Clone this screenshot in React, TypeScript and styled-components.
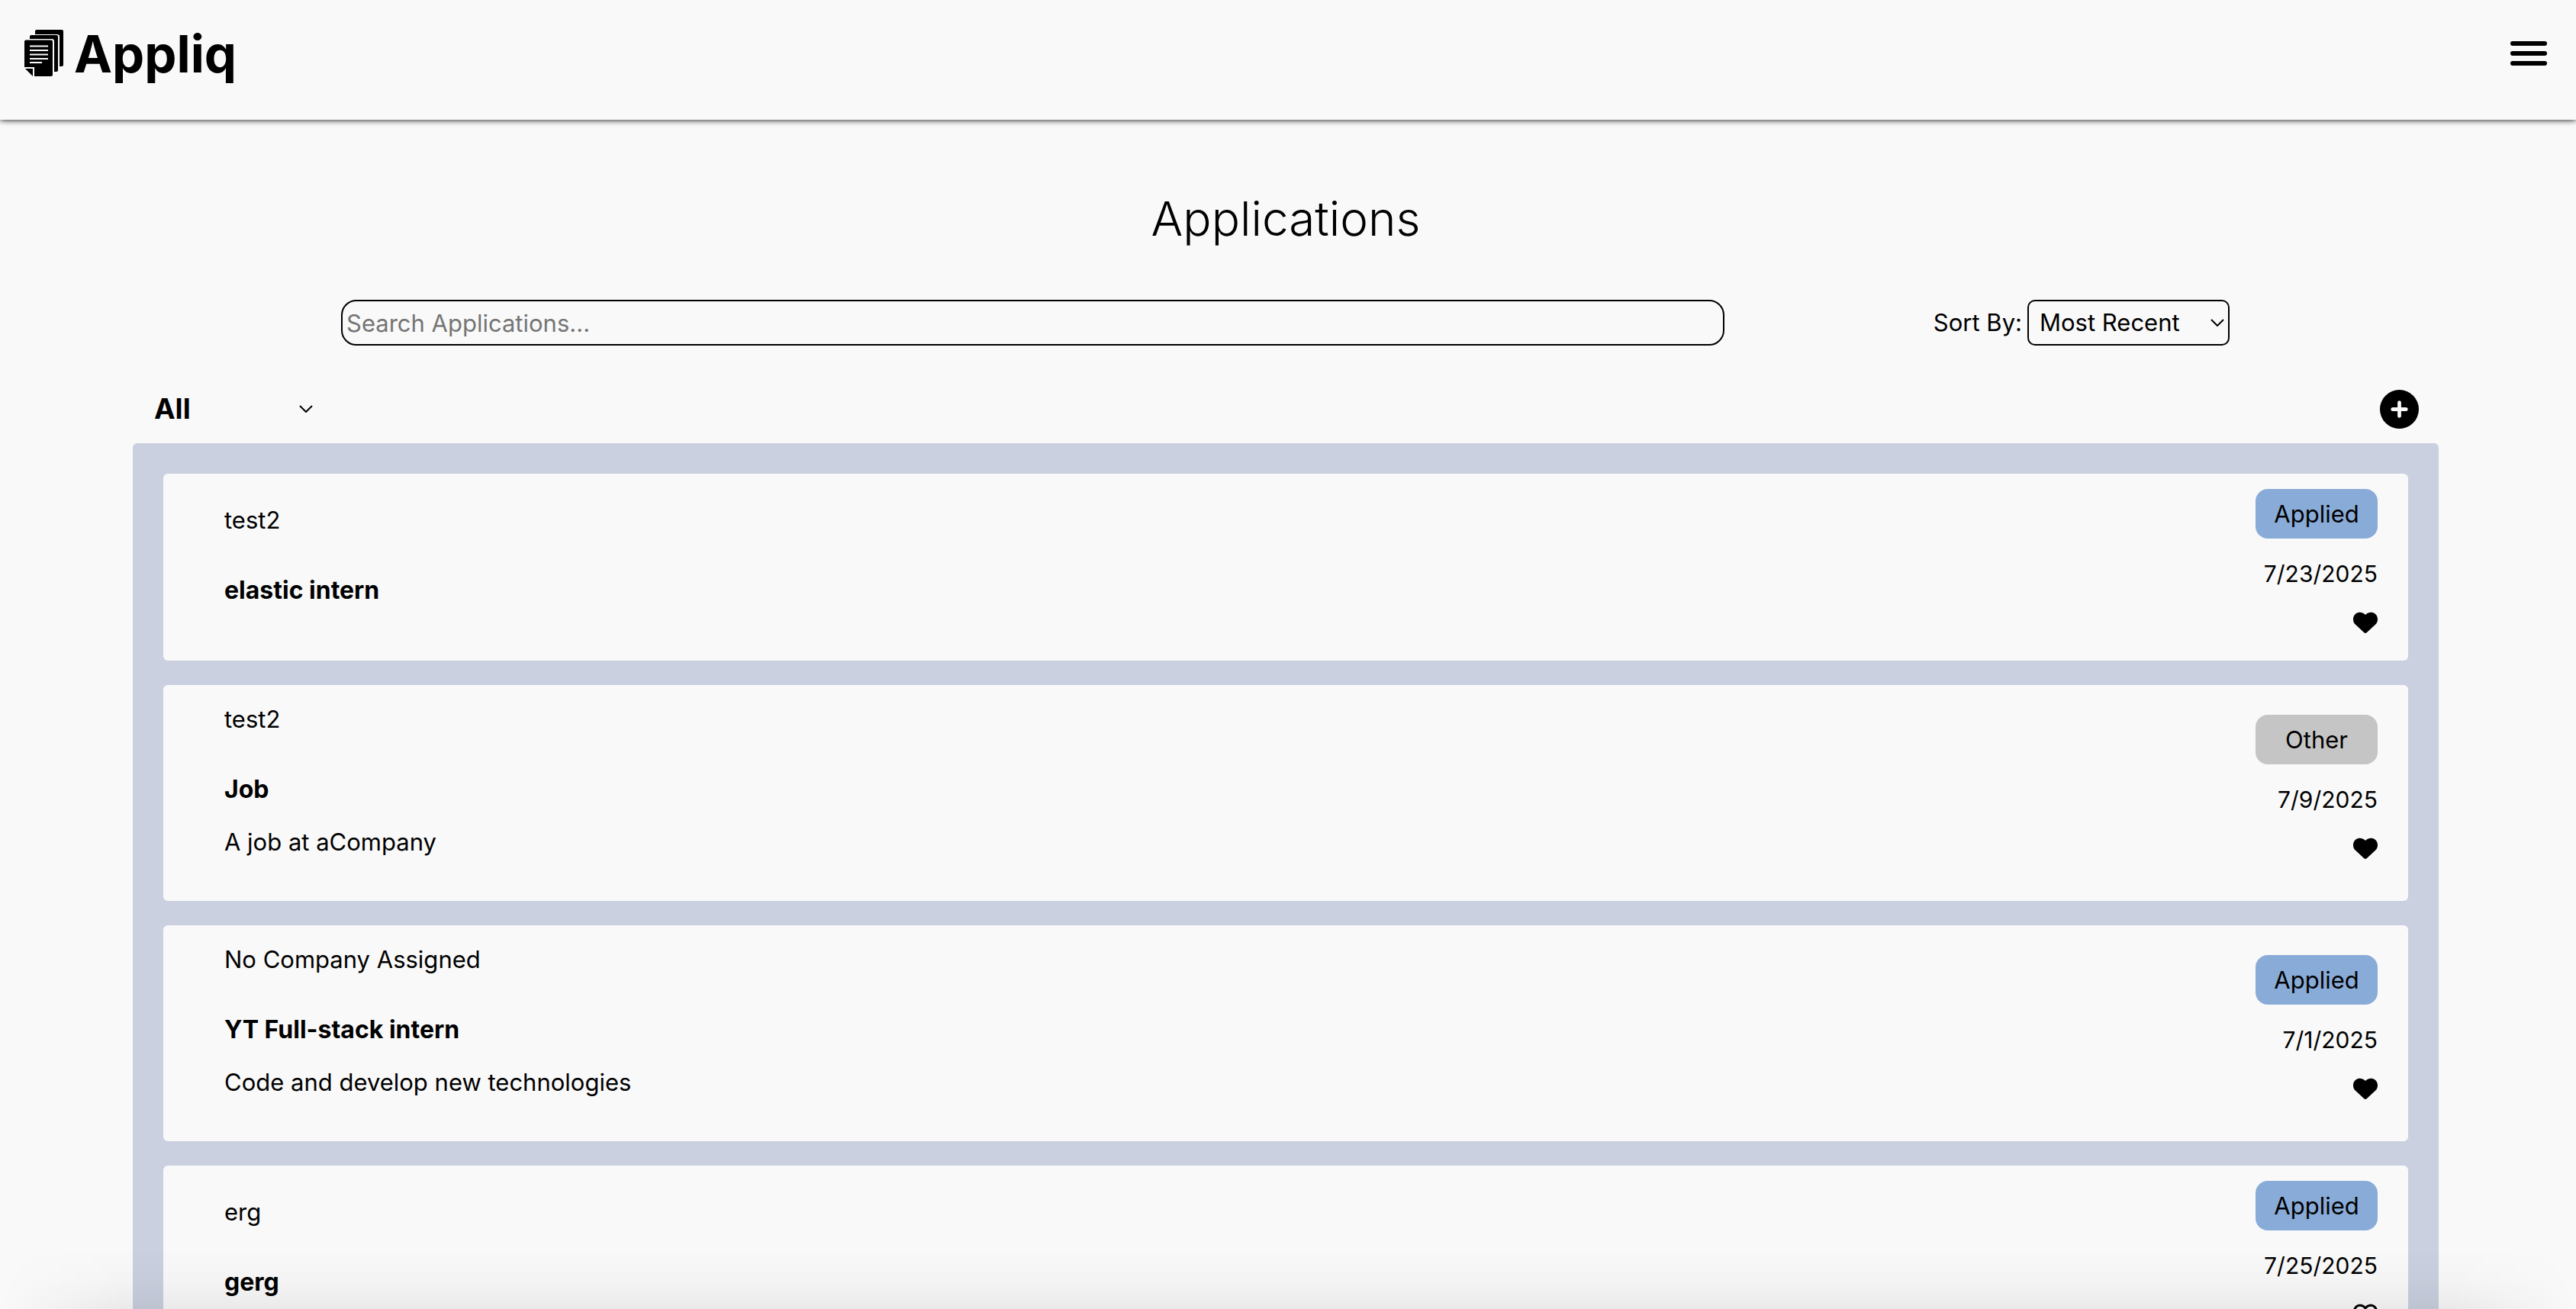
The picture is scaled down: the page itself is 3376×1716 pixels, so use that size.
import React, { useState } from "react";
import styled, { createGlobalStyle } from "styled-components";
import { FaCirclePlus, FaHeart, FaRegHeart } from "react-icons/fa6";

const ink = "#000000";
const paper = "#f9f9f9";

const GlobalStyle = createGlobalStyle`
  *, *::before, *::after { box-sizing: border-box; }
  html, body { margin: 0; background: ${paper}; }
  body {
    color: ${ink};
    font-family: Inter, "Noto Sans", sans-serif;
    font-size: 31px;
    line-height: 38px;
  }
  html { scrollbar-width: none; }
  button, input, select { font: inherit; color: inherit; }
  h1, h2, p { margin: 0; font: inherit; }
`;

const Header = styled.header`
  display: flex;
  justify-content: space-between;
  align-items: flex-start;
  height: 157px;
  padding: 30px 38px 0 32px;
  background: ${paper};
  box-shadow: 0 0 8px ${ink};
`;

const Brand = styled.a`
  display: flex;
  align-items: flex-start;
  gap: 13px;
  color: inherit;
  text-decoration: none;
  font-size: 67px;
  font-weight: 700;
  line-height: 82px;
`;

const BrandMark = styled.svg`
  width: 52px;
  height: 62px;
  margin-top: 9px;
`;

const MenuButton = styled.button`
  display: flex;
  flex-direction: column;
  gap: 7px;
  margin-top: 24px;
  padding: 0;
  border: 0;
  background: none;
  cursor: pointer;
`;

const MenuBar = styled.span`
  width: 48px;
  height: 6px;
  border-radius: 3px;
  background: ${ink};
`;

const Main = styled.main`
  padding: 88px 180px 0 174px;
`;

const PageTitle = styled.h1`
  font-size: 62px;
  font-weight: 300;
  line-height: 84px;
  text-align: center;
`;

const Filters = styled.form`
  display: flex;
  justify-content: space-between;
  padding: 64px 274px 0 273px;
`;

const SearchBox = styled.input`
  flex: 0 1 1813px;
  height: 60px;
  padding: 0 5px;
  border: 2px solid ${ink};
  border-radius: 20px;
  background: ${paper};
  &::placeholder { color: #757575; opacity: 1; }
`;

const SortLabel = styled.label`
  display: flex;
  align-items: center;
  gap: 7px;
  white-space: nowrap;
`;

const SelectWrap = styled.span<{ $width: number; $chevronRight: number }>`
  position: relative;
  display: flex;
  align-items: center;
  width: ${(p) => p.$width}px;
  svg {
    position: absolute;
    right: ${(p) => p.$chevronRight}px;
    width: 18px;
    height: 10px;
    pointer-events: none;
  }
`;

const SortSelect = styled.select`
  appearance: none;
  width: 100%;
  height: 60px;
  padding: 0 14px;
  border: 2px solid ${ink};
  border-radius: 10px;
  background: ${paper};
`;

const StatusSelect = styled.select`
  appearance: none;
  width: 100%;
  height: 60px;
  padding: 0;
  border: 0;
  background: none;
  font-size: 37px;
  font-weight: 700;
`;

const ListBar = styled.div`
  display: flex;
  justify-content: space-between;
  align-items: center;
  margin-top: 53px;
  padding: 0 26px 15px 28px;
`;

const IconButton = styled.button<{ $size: number }>`
  display: flex;
  padding: 0;
  border: 0;
  background: none;
  cursor: pointer;
  svg {
    width: ${(p) => p.$size}px;
    height: ${(p) => p.$size}px;
  }
`;

const List = styled.ul`
  display: flex;
  flex-direction: column;
  gap: 32px;
  margin: 0;
  padding: 40px;
  border-radius: 6px;
  background: #cad0df;
  list-style: none;
`;

const Card = styled.li`
  display: flex;
  justify-content: space-between;
  align-items: center;
  padding: 20px 40px 20px 80px;
  border-radius: 6px;
  background: ${paper};
`;

const CardText = styled.div`
  padding: 6px 0 38px;
`;

const Role = styled.h2`
  margin-top: 54px;
  font-size: 32px;
  font-weight: 700;
`;

const Description = styled.p`
  margin-top: 31px;
`;

const CardMeta = styled.div`
  display: flex;
  flex-direction: column;
  align-items: flex-end;
  padding-bottom: 14px;
`;

const Badge = styled.span<{ $color: string }>`
  width: 160px;
  margin-bottom: 27px;
  border-radius: 16px;
  background: ${(p) => p.$color};
  line-height: 65px;
  text-align: center;
`;

const Applied = styled.time`
  margin-bottom: 29px;
  font-size: 30px;
`;

const BottomShade = styled.div`
  position: fixed;
  right: 0;
  bottom: 0;
  left: 0;
  height: 80px;
  background: linear-gradient(to top, rgba(0, 0, 0, 0.06), rgba(0, 0, 0, 0.02) 45%, transparent);
  mask-image: linear-gradient(to right, transparent, black 160px, black calc(100% - 160px), transparent);
  pointer-events: none;
`;

const Chevron = () => (
  <svg viewBox="0 0 18 10" fill="none" stroke={ink} strokeWidth="2" aria-hidden="true">
    <path d="M1 1l8 8 8-8" />
  </svg>
);

const Logo = () => (
  <BrandMark viewBox="0 0 52 62" aria-hidden="true">
    <path d="M16 0H49a2 2 0 0 1 2 2V46a2 2 0 0 1-2 2H46V9a3 3 0 0 0-3-3H14V2a2 2 0 0 1 2-2z" />
    <path d="M9 7H42a2 2 0 0 1 2 2V53a2 2 0 0 1-2 2H39V15a3 3 0 0 0-3-3H7V9a2 2 0 0 1 2-2z" />
    <path d="M2 13.500H35a2 2 0 0 1 2 2V59a2 2 0 0 1-2 2H13V49H0V15.500a2 2 0 0 1 2-2z" />
    <path d="M1 51H11V61z" />
    <path d="M7 21.500H31M7 27H31M7 32.500H31M7 38H31M7 43H23" stroke={paper} strokeWidth="2" />
  </BrandMark>
);

const statusColors: Record<string, string> = { Applied: "#89abd8", Other: "#c5c5c5" };

const initialApplications = [
  { id: 1, company: "test2", role: "elastic intern", description: "", status: "Applied", date: "7/23/2025", liked: true },
  { id: 2, company: "test2", role: "Job", description: "A job at aCompany", status: "Other", date: "7/9/2025", liked: true },
  { id: 3, company: "No Company Assigned", role: "YT Full-stack intern", description: "Code and develop new technologies", status: "Applied", date: "7/1/2025", liked: true },
  { id: 4, company: "erg", role: "gerg", description: "", status: "Applied", date: "7/25/2025", liked: false },
];

export default function App() {
  const [applications, setApplications] = useState(initialApplications);
  const toggleLike = (id: number) =>
    setApplications((list) => list.map((a) => (a.id === id ? { ...a, liked: !a.liked } : a)));

  return (
    <>
      <GlobalStyle />
      <Header>
        <Brand href="#">
          <Logo />
          Appliq
        </Brand>
        <MenuButton type="button" aria-label="Menu">
          <MenuBar />
          <MenuBar />
          <MenuBar />
        </MenuButton>
      </Header>
      <Main>
        <PageTitle>Applications</PageTitle>
        <Filters>
          <SearchBox type="text" aria-label="Search Applications" placeholder="Search Applications..." />
          <SortLabel htmlFor="sort">
            Sort By:
            <SelectWrap $width={265} $chevronRight={7}>
              <SortSelect id="sort">
                <option>Most Recent</option>
              </SortSelect>
              <Chevron />
            </SelectWrap>
          </SortLabel>
        </Filters>
        <ListBar>
          <SelectWrap $width={214} $chevronRight={6}>
            <StatusSelect aria-label="Status">
              <option>All</option>
            </StatusSelect>
            <Chevron />
          </SelectWrap>
          <IconButton $size={51} type="button" aria-label="Add application">
            <FaCirclePlus />
          </IconButton>
        </ListBar>
        <List>
          {applications.map((a) => (
            <Card key={a.id}>
              <CardText>
                <p>{a.company}</p>
                <Role>{a.role}</Role>
                {a.description && <Description>{a.description}</Description>}
              </CardText>
              <CardMeta>
                <Badge $color={statusColors[a.status]}>{a.status}</Badge>
                <Applied>{a.date}</Applied>
                <IconButton $size={32} type="button" aria-label="Favorite" aria-pressed={a.liked} onClick={() => toggleLike(a.id)}>
                  {a.liked ? <FaHeart /> : <FaRegHeart />}
                </IconButton>
              </CardMeta>
            </Card>
          ))}
        </List>
      </Main>
      <BottomShade />
    </>
  );
}
